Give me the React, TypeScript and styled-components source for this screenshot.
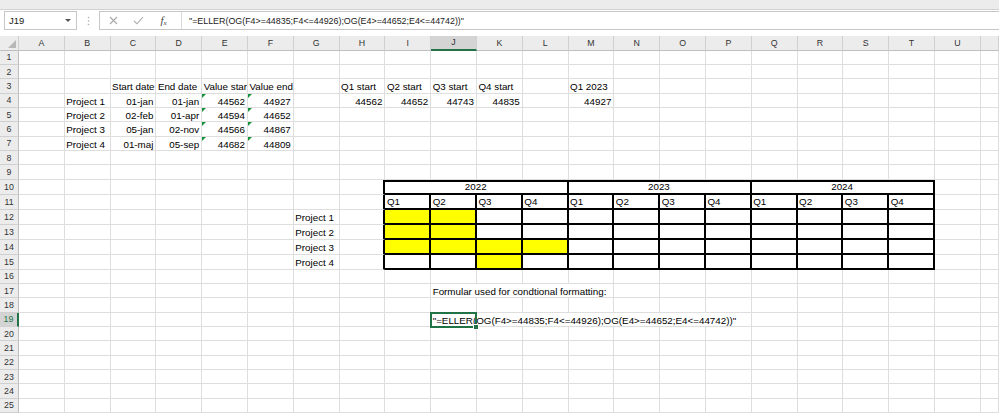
import React from "react";
import styled, { createGlobalStyle, css } from "styled-components";

const GlobalStyle = createGlobalStyle`
  html, body { margin: 0; padding: 0; background: #fff; overflow: hidden; }
  body { font-family: "Liberation Sans", Arial, sans-serif; }
`;

const COLS = "ABCDEFGHIJKLMNOPQRSTU".split("");
const SEL_COL = "J";
const SEL_ROW = 19;

type Align = "l" | "r" | "c";
type CellData = { t?: string; a?: Align; span?: number; tri?: boolean; fill?: string; sel?: boolean };

const YELLOW = "#ffff00";

const data: Record<string, CellData> = {
  C3: { t: "Start date" }, D3: { t: "End date" }, E3: { t: "Value star" }, F3: { t: "Value end" },
  H3: { t: "Q1 start" }, I3: { t: "Q2 start" }, J3: { t: "Q3 start" }, K3: { t: "Q4 start" }, M3: { t: "Q1 2023" },
  B4: { t: "Project 1" }, C4: { t: "01-jan", a: "r" }, D4: { t: "01-jan", a: "r" },
  E4: { t: "44562", a: "r", tri: true }, F4: { t: "44927", a: "r", tri: true },
  H4: { t: "44562", a: "r" }, I4: { t: "44652", a: "r" }, J4: { t: "44743", a: "r" }, K4: { t: "44835", a: "r" },
  M4: { t: "44927", a: "r" },
  B5: { t: "Project 2" }, C5: { t: "02-feb", a: "r" }, D5: { t: "01-apr", a: "r" },
  E5: { t: "44594", a: "r", tri: true }, F5: { t: "44652", a: "r", tri: true },
  B6: { t: "Project 3" }, C6: { t: "05-jan", a: "r" }, D6: { t: "02-nov", a: "r" },
  E6: { t: "44566", a: "r", tri: true }, F6: { t: "44867", a: "r", tri: true },
  B7: { t: "Project 4" }, C7: { t: "01-maj", a: "r" }, D7: { t: "05-sep", a: "r" },
  E7: { t: "44682", a: "r", tri: true }, F7: { t: "44809", a: "r", tri: true },
  I10: { t: "2022", a: "c", span: 4 }, M10: { t: "2023", a: "c", span: 4 }, Q10: { t: "2024", a: "c", span: 4 },
  I11: { t: "Q1" }, J11: { t: "Q2" }, K11: { t: "Q3" }, L11: { t: "Q4" },
  M11: { t: "Q1" }, N11: { t: "Q2" }, O11: { t: "Q3" }, P11: { t: "Q4" },
  Q11: { t: "Q1" }, R11: { t: "Q2" }, S11: { t: "Q3" }, T11: { t: "Q4" },
  G12: { t: "Project 1" }, G13: { t: "Project 2" }, G14: { t: "Project 3" }, G15: { t: "Project 4" },
  I12: { fill: YELLOW }, J12: { fill: YELLOW },
  I13: { fill: YELLOW }, J13: { fill: YELLOW },
  I14: { fill: YELLOW }, J14: { fill: YELLOW }, K14: { fill: YELLOW }, L14: { fill: YELLOW },
  K15: { fill: YELLOW },
  J17: { t: "Formular used for condtional formatting:", span: 4 },
  J19: { t: '"=ELLER(OG(F4>=44835;F4<=44926);OG(E4>=44652;E4<=44742))"', span: 7, sel: true },
};

const inTable = (ci: number, r: number) => ci >= 8 && ci <= 19 && r >= 10 && r <= 15;

const Window = styled.div`
  width: 999px;
  height: 413px;
  display: flex;
  flex-direction: column;
  overflow: hidden;
  background: #fff;
`;

const RibbonEdge = styled.div`
  flex: none;
  height: 9px;
  background: #ececec;
  border-bottom: 1px solid #d2d2d2;
`;

const FormulaBar = styled.div`
  flex: none;
  height: 26px;
  box-sizing: border-box;
  padding: 1px 0 0 4px;
  display: flex;
  align-items: flex-start;
  background: #fff;
`;

const NameBox = styled.div`
  width: 73px;
  height: 19px;
  box-sizing: border-box;
  border: 1px solid #c6c6c6;
  display: flex;
  align-items: center;
  justify-content: space-between;
  padding: 0 5px 0 4px;
  font-size: 9.5px;
  color: #222;
`;

const Caret = styled.span`
  width: 0;
  height: 0;
  border-left: 3px solid transparent;
  border-right: 3px solid transparent;
  border-top: 3px solid #555;
`;

const Grip = styled.div`
  width: 22px;
  height: 19px;
  display: flex;
  align-items: center;
  justify-content: center;
`;

const FormulaBox = styled.div`
  flex: 1;
  height: 19px;
  box-sizing: border-box;
  border: 1px solid #c6c6c6;
  border-right: none;
  display: flex;
  align-items: stretch;
  padding-left: 1px;
`;

const IconSlot = styled.div`
  width: 25px;
  display: flex;
  align-items: center;
  justify-content: center;
`;

const Fx = styled.span`
  font-family: "Liberation Serif", "Times New Roman", serif;
  font-style: italic;
  font-size: 11px;
  color: #444;
  sub {
    font-size: 7px;
    vertical-align: -1px;
  }
`;

const FormulaInput = styled.div`
  flex: 1;
  margin-left: 5px;
  border-left: 1px solid #dadada;
  padding-left: 7px;
  display: flex;
  align-items: center;
  font-size: 8.9px;
  color: #222;
  white-space: nowrap;
`;

const Sheet = styled.div`
  flex: none;
  display: grid;
  grid-template-columns: 19px repeat(21, 45.8px) 1fr;
  grid-template-rows: 14.7px repeat(9, 14.33px) repeat(6, 15px) repeat(10, 14.33px);
`;

const Corner = styled.div`
  position: relative;
  box-sizing: border-box;
  background: #ececec;
  border-right: 1px solid #cfcfcf;
  border-bottom: 1px solid #bfbfbf;
  &::after {
    content: "";
    position: absolute;
    right: 2px;
    bottom: 2px;
    width: 0;
    height: 0;
    border-left: 8px solid transparent;
    border-bottom: 8px solid #b8b8b8;
  }
`;

const ColHead = styled.div<{ $sel?: boolean }>`
  box-sizing: border-box;
  background: ${(p) => (p.$sel ? "#d4d4d4" : "#ececec")};
  border-right: 1px solid #d0d0d0;
  border-bottom: ${(p) => (p.$sel ? "2px solid #217346" : "1px solid #bfbfbf")};
  display: flex;
  align-items: center;
  justify-content: center;
  font-size: 8.8px;
  color: #333;
`;

const RowHead = styled.div<{ $sel?: boolean }>`
  box-sizing: border-box;
  background: ${(p) => (p.$sel ? "#d4d4d4" : "#ececec")};
  border-right: ${(p) => (p.$sel ? "2px solid #217346" : "1px solid #bfbfbf")};
  border-bottom: 1px solid #d0d0d0;
  display: flex;
  align-items: center;
  justify-content: center;
  font-size: 8.8px;
  color: ${(p) => (p.$sel ? "#217346" : "#333")};
`;

const Cell = styled.div<{
  $align?: Align;
  $fill?: string;
  $span?: number;
  $tb?: boolean;
  $tbTop?: boolean;
  $edge?: boolean;
  $open?: boolean;
}>`
  position: relative;
  box-sizing: border-box;
  min-width: 0;
  grid-column: span ${(p) => p.$span ?? 1};
  border-right: 1px solid #dedede;
  border-bottom: 1px solid #dedede;
  background: ${(p) => p.$fill ?? "transparent"};
  font-size: 9.8px;
  line-height: 1;
  color: #000;
  white-space: nowrap;
  overflow: ${(p) => (p.$open ? "visible" : "hidden")};
  display: flex;
  align-items: flex-end;
  justify-content: ${(p) => (p.$align === "r" ? "flex-end" : p.$align === "c" ? "center" : "flex-start")};
  padding: 0 2px 0 1.5px;
  ${(p) =>
    p.$tb &&
    css`
      border-right: 2px solid #000;
      border-bottom: 2px solid #000;
    `}
  ${(p) =>
    p.$tbTop &&
    css`
      border-top: 2px solid #000;
    `}
  ${(p) =>
    p.$edge &&
    css`
      border-right: 2px solid #000;
    `}
`;

const ErrorMark = styled.span`
  position: absolute;
  top: 0;
  left: 0;
  width: 0;
  height: 0;
  border-top: 4px solid #14913a;
  border-right: 4px solid transparent;
`;

const Selection = styled.span`
  position: absolute;
  left: -1.5px;
  top: -1px;
  width: 47.3px;
  height: 16px;
  box-sizing: border-box;
  border: 2px solid #217346;
  z-index: 2;
  pointer-events: none;
  &::after {
    content: "";
    position: absolute;
    right: -4px;
    bottom: -4px;
    width: 4px;
    height: 4px;
    background: #217346;
    border: 1px solid #fff;
  }
`;

const CellText = styled.span`
  position: relative;
  padding-bottom: 0.5px;
`;

export default function App() {
  const rows: React.ReactNode[] = [];
  for (let r = 1; r <= 25; r++) {
    rows.push(
      <RowHead key={`rh${r}`} $sel={r === SEL_ROW}>
        {r}
      </RowHead>
    );
    let skip = 0;
    COLS.forEach((c, ci) => {
      if (skip > 0) {
        skip--;
        return;
      }
      const key = `${c}${r}`;
      const d = data[key] ?? {};
      const span = d.span ?? 1;
      skip = span - 1;
      const tb = inTable(ci, r);
      rows.push(
        <Cell
          key={key}
          $align={d.a}
          $fill={d.fill}
          $span={span}
          $tb={tb}
          $tbTop={tb && r === 10}
          $edge={c === "H" && r >= 10 && r <= 15}
          $open={!!d.sel}
        >
          {d.tri && <ErrorMark />}
          {d.t && <CellText>{d.t}</CellText>}
          {d.sel && <Selection />}
        </Cell>
      );
    });
    rows.push(<Cell key={`fill${r}`} />);
  }

  return (
    <>
      <GlobalStyle />
      <Window>
        <RibbonEdge />
        <FormulaBar>
          <NameBox>
            <span>J19</span>
            <Caret />
          </NameBox>
          <Grip>
            <svg width="3" height="10" viewBox="0 0 3 10">
              <circle cx="1.5" cy="1.5" r="0.8" fill="#b0b0b0" />
              <circle cx="1.5" cy="5" r="0.8" fill="#b0b0b0" />
              <circle cx="1.5" cy="8.5" r="0.8" fill="#b0b0b0" />
            </svg>
          </Grip>
          <FormulaBox>
            <IconSlot>
              <svg width="9" height="9" viewBox="0 0 9 9">
                <path d="M1 1 L8 8 M8 1 L1 8" stroke="#a8a8a8" strokeWidth="1.1" fill="none" />
              </svg>
            </IconSlot>
            <IconSlot>
              <svg width="11" height="9" viewBox="0 0 11 9">
                <path d="M1 4.8 L4 7.8 L10 1" stroke="#a8a8a8" strokeWidth="1.1" fill="none" />
              </svg>
            </IconSlot>
            <IconSlot>
              <Fx>
                f<sub>x</sub>
              </Fx>
            </IconSlot>
            <FormulaInput>"=ELLER(OG(F4&gt;=44835;F4&lt;=44926);OG(E4&gt;=44652;E4&lt;=44742))"</FormulaInput>
          </FormulaBox>
        </FormulaBar>
        <Sheet>
          <Corner />
          {COLS.map((c) => (
            <ColHead key={`ch${c}`} $sel={c === SEL_COL}>
              {c}
            </ColHead>
          ))}
          <ColHead />
          {rows}
        </Sheet>
      </Window>
    </>
  );
}
